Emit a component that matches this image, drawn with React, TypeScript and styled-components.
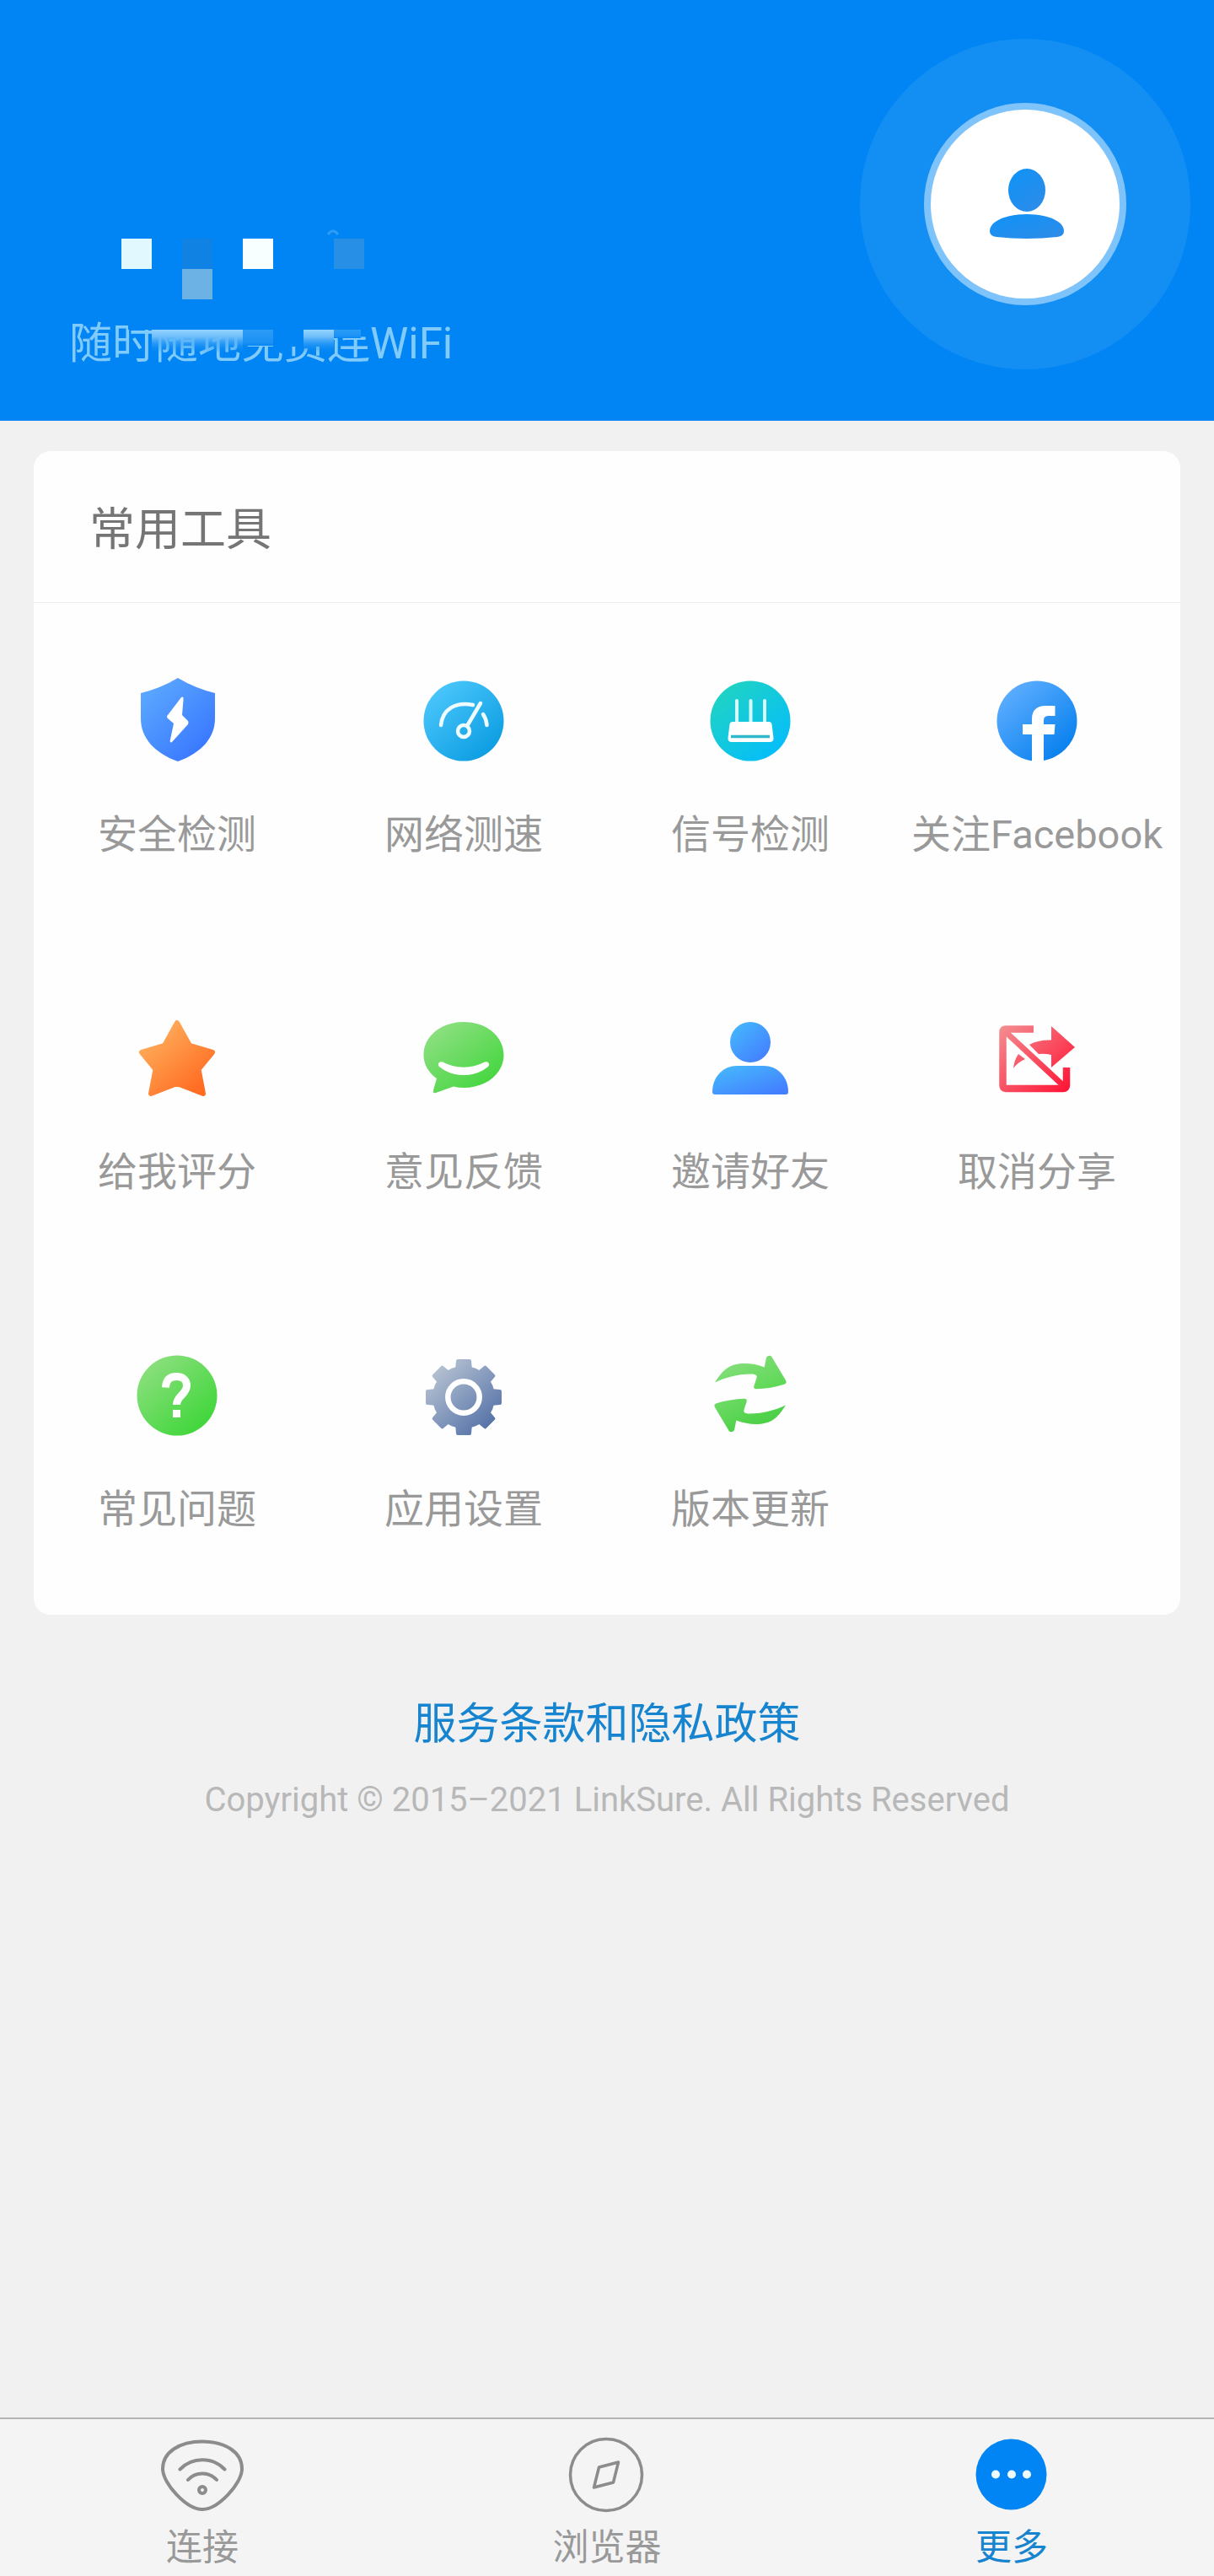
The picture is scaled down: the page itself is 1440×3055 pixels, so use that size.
import React from "react";
import styled, { createGlobalStyle } from "styled-components";

const GlobalStyle = createGlobalStyle`
  *, *::before, *::after { box-sizing: border-box; }
  body {
    margin: 0;
    background: #f1f1f1;
    font-family: Roboto, "Noto Sans CJK SC", sans-serif;
  }
`;

const Page = styled.div`
  display: flex;
  flex-direction: column;
  min-height: 100vh;
`;

const Header = styled.header`
  display: flex;
  align-items: flex-end;
  justify-content: space-between;
  padding: 46px 28px 61px 82px;
  background: #0285f4;
`;

const Profile = styled.div`
  display: flex;
  flex-direction: column;
  gap: 22px;
`;

const NameMosaic = styled.svg`
  display: block;
  width: 360px;
  height: 84px;
`;

const Slogan = styled.p`
  position: relative;
  margin: 0;
  font-size: 51px;
  line-height: 60px;
  color: #80cbfb;
  white-space: nowrap;
`;

const SloganMosaic = styled.svg`
  position: absolute;
  top: 0;
  left: 0;
  width: 360px;
  height: 60px;
`;

const Halo = styled.div`
  display: grid;
  place-items: center;
  flex: none;
  width: 392px;
  height: 392px;
  border-radius: 50%;
  background: #138ff4;
`;

const Avatar = styled.button`
  display: grid;
  place-items: center;
  width: 240px;
  height: 240px;
  padding: 0;
  border: 8px solid #7fc3fb;
  border-radius: 50%;
  background: #fff;
  cursor: pointer;
`;

const Card = styled.main`
  margin: 36px 40px 0;
  border-radius: 20px;
  background: #fefefe;
`;

const CardTitle = styled.h1`
  margin: 0;
  padding: 61px 66px 52px;
  border-bottom: 1px solid #ededed;
  font-size: 54px;
  font-weight: 400;
  line-height: 66px;
  color: #757575;
`;

const ToolGrid = styled.div`
  display: grid;
  grid-template-columns: repeat(4, minmax(0, 1fr));
`;

const Tool = styled.button`
  display: flex;
  flex-direction: column;
  align-items: center;
  gap: 57px;
  height: 400px;
  padding: 90px 0 0;
  border: 0;
  background: none;
  font-family: inherit;
  font-size: 47px;
  line-height: 56px;
  color: #999;
  white-space: nowrap;
  cursor: pointer;
`;

const Icon = styled.svg`
  display: block;
  width: 100px;
  height: 100px;
  overflow: visible;
`;

const Footer = styled.footer`
  display: flex;
  flex-direction: column;
  align-items: center;
  gap: 36px;
  padding: 100px 0 48px;
`;

const Terms = styled.a`
  font-size: 51px;
  line-height: 60px;
  color: #1684cf;
  text-decoration: none;
`;

const Copyright = styled.p`
  margin: 0;
  font-size: 40px;
  line-height: 48px;
  color: #b8b8b8;
`;

const TabBar = styled.nav`
  display: grid;
  grid-template-columns: repeat(3, 1fr);
  margin-top: auto;
  border-top: 2px solid #b4b4b4;
  background: #f4f4f4;
`;

const Tab = styled.button<{ $active?: boolean }>`
  display: flex;
  flex-direction: column;
  align-items: center;
  gap: 12px;
  padding: 16px 0 10px;
  border: 0;
  background: none;
  font-family: inherit;
  font-size: 43px;
  line-height: 48px;
  color: ${(p) => (p.$active ? "#1684cf" : "#999")};
  cursor: pointer;
`;

function Gradient({ id, from, to }: { id: string; from: string; to: string }) {
  return (
    <defs>
      <linearGradient id={id} x1="0.15" y1="0.1" x2="0.85" y2="0.9">
        <stop offset="0" stopColor={from} />
        <stop offset="1" stopColor={to} />
      </linearGradient>
    </defs>
  );
}

function Glyph({ children }: { children: React.ReactNode }) {
  return (
    <Icon viewBox="0 0 100 100" fill="none" aria-hidden="true">
      {children}
    </Icon>
  );
}

const gearTeeth = [0, 45, 90, 135, 180, 225, 270, 315];

const refreshArrow =
  "M8 34.500C13 27 17 21 23 17.300C32 11 50 10 66.700 16.500L69 5Q71.500 1.500 75 3.500L92 32Q94 35.500 90 36.700C80 40 68 42 57 42.300Q53.500 42 54.300 39L57.500 29C58.500 26 56 24.500 51 24.500C34 24.500 20 29 8 34.500Z";

const tools = [
  {
    label: "安全检测",
    icon: (
      <Glyph>
        <Gradient id="shield" from="#5aa6ff" to="#3877ff" />
        <path d="M51 -1Q71 11 95 17V47C95 70 79 88 51 98C23 88 7 70 7 47V17Q31 11 51 -1Z" fill="url(#shield)" />
        <path d="M55 22Q58 20 57.500 25L56 43L63 50Q64 52 63 54L44 75Q41 77 42 72L46 53L39 47Q37 45 39 43Z" fill="#fff" />
      </Glyph>
    ),
  },
  {
    label: "网络测速",
    icon: (
      <Glyph>
        <Gradient id="gauge" from="#4ac6fb" to="#0c9de2" />
        <circle cx="50" cy="50" r="47.5" fill="url(#gauge)" />
        <g stroke="#effcff" strokeWidth="4.500" strokeLinecap="round">
          <path d="M23 55C25 36 40 27 61 31M73 42Q77 48 77.500 55M54 56L70 29" />
          <circle cx="50" cy="62" r="7" />
        </g>
      </Glyph>
    ),
  },
  {
    label: "信号检测",
    icon: (
      <Glyph>
        <Gradient id="router" from="#1fd3c4" to="#05bdfa" />
        <circle cx="50" cy="50" r="47.5" fill="url(#router)" />
        <path d="M34 26V54M50.500 26V54M67 26V54" stroke="#d6fbff" strokeWidth="4" strokeLinecap="round" />
        <path d="M29 51H72Q75 51 75.500 54L77.500 70Q78 75 73 75H28Q23 75 23.500 70L25.500 54Q26 51 29 51Z" fill="#fff" />
        <path d="M27 68.500H73" stroke="#2fb9cc" strokeWidth="3.500" />
      </Glyph>
    ),
  },
  {
    label: "关注Facebook",
    icon: (
      <Glyph>
        <Gradient id="social" from="#5cadff" to="#0880ee" />
        <circle cx="50" cy="50" r="47.5" fill="url(#social)" />
        <path d="M44 99V66H33V54H44V48C44 37 50 32 60 32H71.500V44H64Q58 44 58 49V54H71.500L70.500 66H58V99Z" fill="#fff" />
      </Glyph>
    ),
  },
  {
    label: "给我评分",
    icon: (
      <Glyph>
        <Gradient id="star" from="#ffae5c" to="#ff6c22" />
        <path
          d="M50 8L65 35L92 43L75.500 63L81 92L50 80L19 92L24.500 63L8 43L35 35Z"
          fill="url(#star)"
          stroke="url(#star)"
          strokeWidth="6"
          strokeLinejoin="round"
        />
      </Glyph>
    ),
  },
  {
    label: "意见反馈",
    icon: (
      <Glyph>
        <Gradient id="chat" from="#8cdf80" to="#43d63e" />
        <path d="M50 7C77 7 97.500 24 97.500 46S77 85 50 85Q44 85 38 83.500L17 91Q13 92 14 88L18 74C8 67 2.500 57 2.500 46C2.500 24 23 7 50 7Z" fill="url(#chat)" />
        <path d="M25 54.500Q50 67 75 54.500C79 53 82 57 79 60Q67 70 50 70T21 60C18 57 21 53 25 54.500Z" fill="#fff" />
      </Glyph>
    ),
  },
  {
    label: "邀请好友",
    icon: (
      <Glyph>
        <Gradient id="friend" from="#45b4fd" to="#4380ff" />
        <circle cx="50" cy="31" r="24" fill="url(#friend)" />
        <path d="M5 90C5 72 18 59 34 59H66C82 59 95 72 95 90Q95 93 92 93H8Q5 93 5 90Z" fill="url(#friend)" />
      </Glyph>
    ),
  },
  {
    label: "取消分享",
    icon: (
      <Glyph>
        <defs>
          <linearGradient id="unshare" gradientUnits="userSpaceOnUse" x1="8" y1="12" x2="82" y2="88">
            <stop offset="0" stopColor="#f38d90" />
            <stop offset="1" stopColor="#ff1838" />
          </linearGradient>
        </defs>
        <path d="M46 15.500H13Q9.500 15.500 9.500 19V82Q9.500 86 13 86H81Q85 86 85 82V61" stroke="url(#unshare)" strokeWidth="8.500" />
        <path d="M13 19L83 84" stroke="url(#unshare)" strokeWidth="7" />
        <path d="M67 12L95 37L67 61V46Q59 44 52 45L41 34Q51 28 67 28.500Z" fill="url(#unshare)" />
        <path d="M28 45L36 51Q27 55 22 62Q23 52 28 45Z" fill="url(#unshare)" />
      </Glyph>
    ),
  },
  {
    label: "常见问题",
    icon: (
      <Glyph>
        <Gradient id="help" from="#8adf7c" to="#3fd63a" />
        <circle cx="50" cy="50" r="47.500" fill="url(#help)" />
        <path d="M36.500 40.500C37 31 42 27.500 49.500 27.500C57 27.500 61.500 32 61.500 38C61.500 49 49.500 50 49.500 61" stroke="#fff" strokeWidth="9" />
        <path d="M45 67H54V76H45Z" fill="#fff" />
      </Glyph>
    ),
  },
  {
    label: "应用设置",
    icon: (
      <Glyph>
        <defs>
          <linearGradient id="gear" gradientUnits="userSpaceOnUse" x1="18" y1="16" x2="82" y2="86">
            <stop offset="0" stopColor="#b6c2d2" />
            <stop offset="1" stopColor="#5673a8" />
          </linearGradient>
          <mask id="gearShape">
            <circle cx="50" cy="52" r="37" fill="#fff" />
            {gearTeeth.map((angle) => (
              <path key={angle} d="M43 7H57Q59 7 59 9L60 20H40L41 9Q41 7 43 7Z" fill="#fff" transform={`rotate(${angle} 50 52)`} />
            ))}
          </mask>
        </defs>
        <path d="M0 0H100V100H0Z" fill="url(#gear)" mask="url(#gearShape)" />
        <circle cx="50" cy="52" r="18.700" stroke="#fff" strokeWidth="6.500" />
      </Glyph>
    ),
  },
  {
    label: "版本更新",
    icon: (
      <Glyph>
        <defs>
          <linearGradient id="refreshTop" x1="0" y1="0" x2="1" y2="1">
            <stop offset="0" stopColor="#8edf84" />
            <stop offset="1" stopColor="#59d852" />
          </linearGradient>
          <linearGradient id="refreshBottom" x1="1" y1="1" x2="0" y2="0">
            <stop offset="0" stopColor="#72dc68" />
            <stop offset="1" stopColor="#3bcb38" />
          </linearGradient>
        </defs>
        <path d={refreshArrow} fill="url(#refreshTop)" />
        <path d={refreshArrow} fill="url(#refreshBottom)" transform="rotate(180 50 48)" />
      </Glyph>
    ),
  },
];

const tabs = [
  {
    label: "连接",
    active: false,
    icon: (
      <Glyph>
        <g stroke="#8c8c8c" strokeWidth="4" strokeLinecap="round">
          <path d="M50 10.500C77 10.500 97 23 97 43C97 60 69 91 50 91S3 60 3 43C3 23 23 10.500 50 10.500Z" />
          <path d="M23.500 43.500C38 28.500 62 28.500 76.500 43.500M33 56C42 46 58 46 67 56" />
          <circle cx="50" cy="68" r="4" />
        </g>
      </Glyph>
    ),
  },
  {
    label: "浏览器",
    active: false,
    icon: (
      <Glyph>
        <g stroke="#8c8c8c" strokeWidth="3.500" strokeLinejoin="round">
          <circle cx="49" cy="50" r="42.500" />
          <path d="M63.500 35L40.500 41L34.500 65L57.500 59Z" />
        </g>
      </Glyph>
    ),
  },
  {
    label: "更多",
    active: true,
    icon: (
      <Glyph>
        <circle cx="49.500" cy="49.500" r="42" fill="#0285f4" />
        <g fill="#effcff">
          <circle cx="31" cy="49.500" r="5" />
          <circle cx="50" cy="49.500" r="5" />
          <circle cx="68" cy="49.500" r="5" />
        </g>
      </Glyph>
    ),
  },
];

export default function App() {
  return (
    <>
      <GlobalStyle />
      <Page>
        <Header>
          <Profile>
            <NameMosaic viewBox="0 0 360 84" aria-hidden="true">
              <path d="M62 11h36v36h-36z" fill="#e2f8ff" />
              <path d="M134 11h36v36h-36z" fill="#0f82e4" />
              <path d="M134 47h36v36h-36z" fill="#6cb2e4" />
              <path d="M206 11h36v36h-36z" fill="#f8ffff" />
              <path d="M314 11h36v36h-36z" fill="#278fe6" />
              <path d="M307 6Q313 -2 319 6" fill="none" stroke="#2f9cf6" strokeWidth="3" />
            </NameMosaic>
            <Slogan>
              随时随地免费连WiFi
              <SloganMosaic viewBox="0 0 360 60" aria-hidden="true">
                <defs>
                  <linearGradient id="smear" x1="0" y1="0" x2="0" y2="1">
                    <stop offset="0" stopColor="#93d4fd" />
                    <stop offset="0.3" stopColor="#6fbefa" />
                    <stop offset="1" stopColor="#0285f4" stopOpacity="0" />
                  </linearGradient>
                  <linearGradient id="haze" x1="0" y1="0" x2="0" y2="1">
                    <stop offset="0" stopColor="#2c9bf5" />
                    <stop offset="0.8" stopColor="#1b91f5" />
                    <stop offset="1" stopColor="#0285f4" />
                  </linearGradient>
                </defs>
                <path d="M70 0H358V13H70Z" fill="#0285f4" />
                <path d="M242 13H314V33H242Z" fill="#0285f4" />
                <path d="M98 13H206V41H98Z" fill="url(#smear)" />
                <path d="M206 13H242V32H206Z" fill="url(#haze)" />
                <path d="M278 13H314V41H278Z" fill="url(#smear)" />
                <path d="M314 13H346V23H314Z" fill="url(#haze)" />
              </SloganMosaic>
            </Slogan>
          </Profile>
          <Halo>
            <Avatar type="button" aria-label="个人中心">
              <Glyph>
                <Gradient id="avatar" from="#1292f6" to="#2b8ce9" />
                <ellipse cx="52" cy="33.500" rx="22" ry="25.500" fill="url(#avatar)" />
                <path d="M8 82C8 70 28 62 52 62S96 70 96 82Q96 88 88 89Q70 91 52 91T16 89Q8 88 8 82Z" fill="url(#avatar)" />
              </Glyph>
            </Avatar>
          </Halo>
        </Header>

        <Card>
          <CardTitle>常用工具</CardTitle>
          <ToolGrid>
            {tools.map((tool) => (
              <Tool key={tool.label} type="button">
                {tool.icon}
                <span>{tool.label}</span>
              </Tool>
            ))}
          </ToolGrid>
        </Card>

        <Footer>
          <Terms href="#terms">服务条款和隐私政策</Terms>
          <Copyright>Copyright © 2015–2021 LinkSure. All Rights Reserved</Copyright>
        </Footer>

        <TabBar>
          {tabs.map((tab) => (
            <Tab key={tab.label} type="button" $active={tab.active} aria-current={tab.active ? "page" : undefined}>
              {tab.icon}
              <span>{tab.label}</span>
            </Tab>
          ))}
        </TabBar>
      </Page>
    </>
  );
}
